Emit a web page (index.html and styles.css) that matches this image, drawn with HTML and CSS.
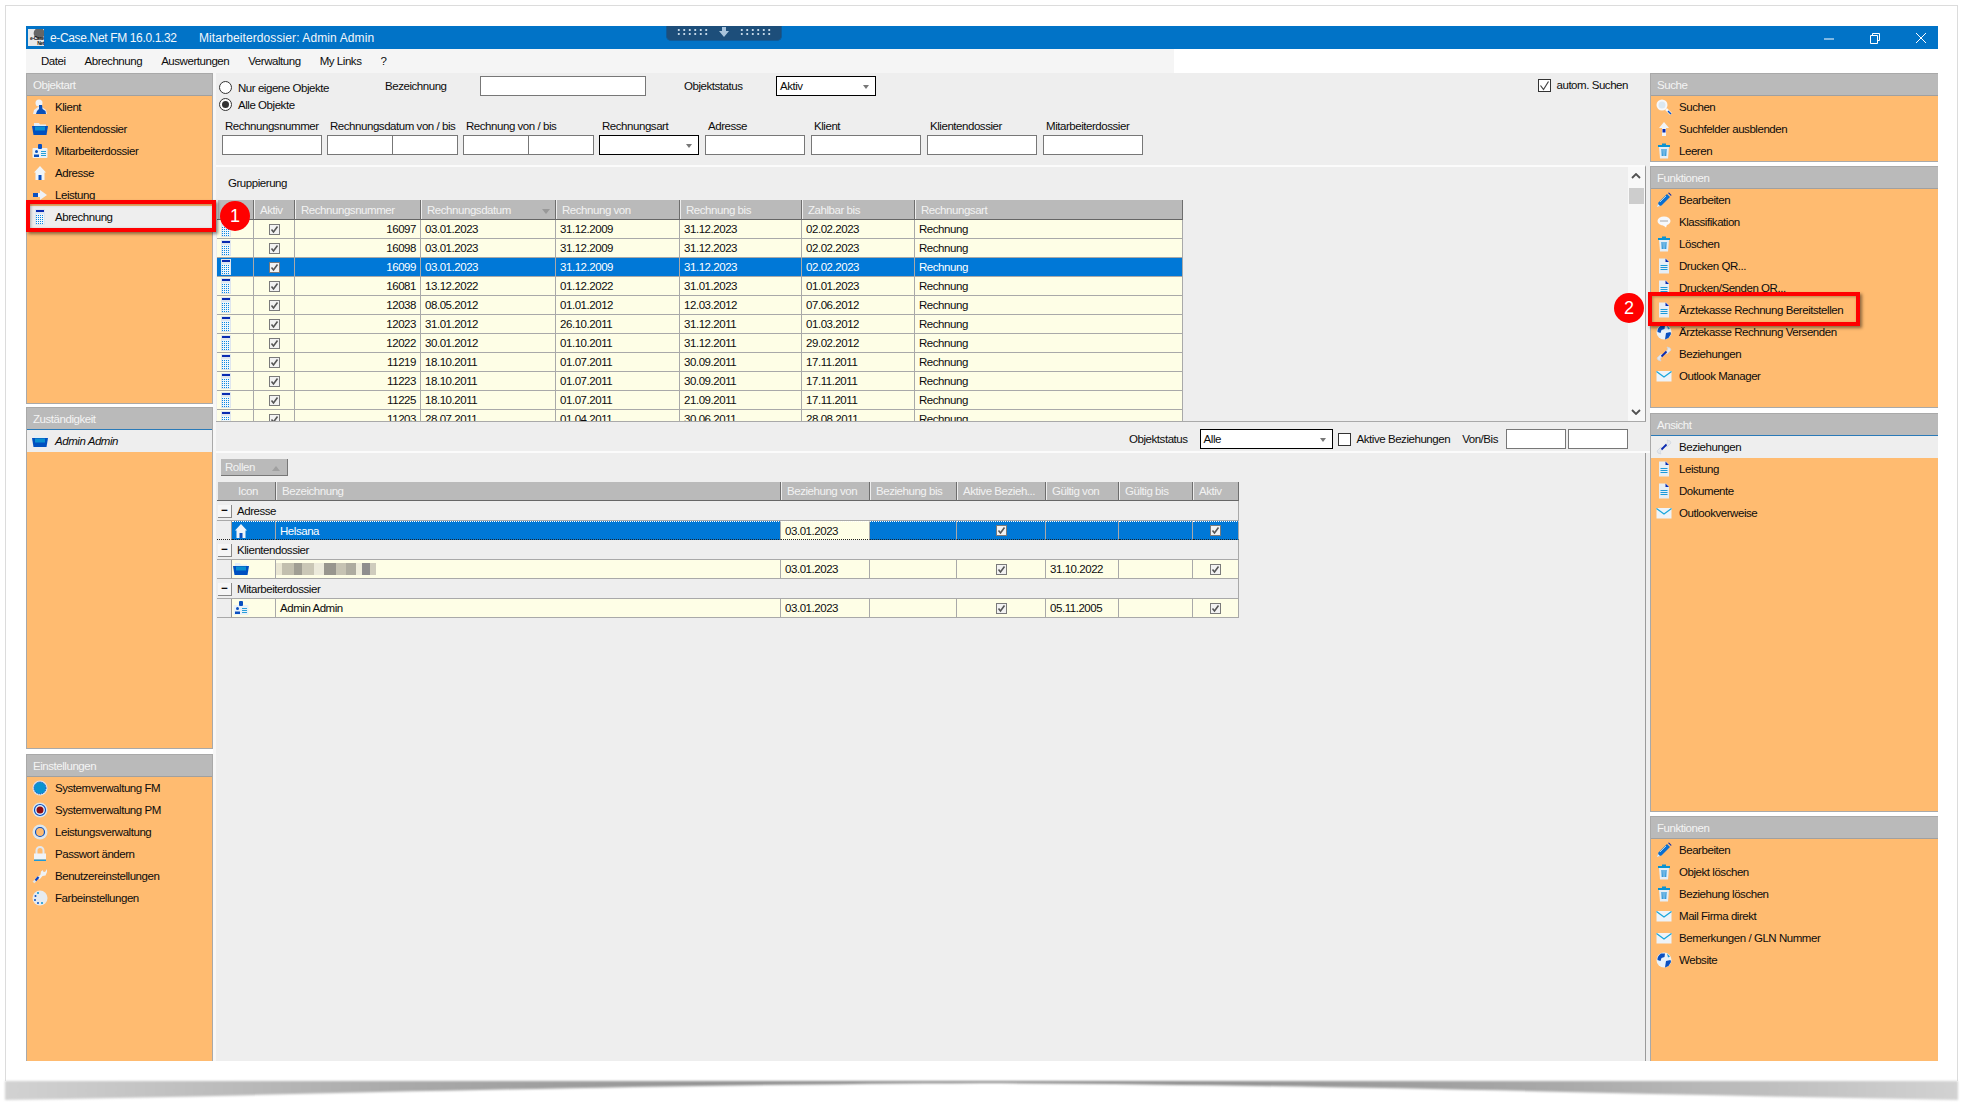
FILE: index.html
```html
<!DOCTYPE html>
<html lang="de">
<head>
    <meta charset="UTF-8">
    <meta name="viewport" content="width=device-width, initial-scale=1.0">
    <title>e-Case.Net FM - Abrechnung</title>
    <link rel="stylesheet" href="styles.css">
</head>
<body>
    <!-- icon sprite -->
    <svg class="sprite" xmlns="http://www.w3.org/2000/svg">
        <defs>
            <linearGradient id="shadowFade" x1="0" x2="1" y1="0" y2="0">
                <stop offset="0" stop-color="#d2d2d2"/>
                <stop offset="0.2" stop-color="#aaa"/>
                <stop offset="0.5" stop-color="#808080"/>
                <stop offset="0.8" stop-color="#aaa"/>
                <stop offset="1" stop-color="#d2d2d2"/>
            </linearGradient>
        </defs>
        <symbol id="i-person" viewBox="0 0 16 16"><circle cx="7" cy="4" r="3.5" fill="#eef3fa"/><path d="M1 15l1-4 4-3h4l4 3 1 4z" fill="#e8eef7"/><path d="M7 6h3l.5 4 3 2 .5 3H4l1-3 2-2z" fill="#0a50b8"/></symbol>
        <symbol id="i-folder" viewBox="0 0 16 16"><path d="M2 2h5l1 1.500h6V7H2z" fill="#e4eef6"/><path d="M0 5h16l-1.500 9h-13z" fill="#0050c0"/><path d="M3 5.500h10v4H3z" fill="#0a8fd0"/></symbol>
        <symbol id="i-badge" viewBox="0 0 16 16"><rect x="0.5" y="5" width="15" height="10" rx="1" fill="#eaf2f8"/><rect x="6" y="1" width="4" height="5" rx="1" fill="#0a50c0"/><circle cx="4.5" cy="8.5" r="1.5" fill="#0a50c0"/><path d="M2 14v-2.500h5V14z" fill="#0a50c0"/><path d="M9 8.500h5M9 10.500h5M9 12.500h5" stroke="#29a0d8"/></symbol>
        <symbol id="i-house" viewBox="0 0 16 16"><path d="M8 1l6 6.500h-1.500V15h-9V7.500H2z" fill="#f0f4f8"/><rect x="6.5" y="10" width="3" height="5" fill="#0a50c0"/></symbol>
        <symbol id="i-arrow" viewBox="0 0 16 16"><path d="M8 3l7 5-7 5V10H1V6h7z" fill="#eef2f8"/><rect x="1" y="6" width="5" height="4" fill="#0a50c0"/></symbol>
        <symbol id="i-calc" viewBox="0 0 16 16"><rect x="3" y="0" width="10" height="16" fill="#dfe6ee"/><rect x="4" y="1" width="8" height="2" fill="#0a2bb0"/><rect x="4" y="5" width="8" height="10" fill="#eef7fc"/><path d="M4 6.500h8M4 8.500h8M4 10.500h8M4 12.500h8M4 14.500h8" stroke="#0a86e0" stroke-dasharray="1 1"/></symbol>
        <symbol id="i-search" viewBox="0 0 16 16"><circle cx="6" cy="6" r="4.500" fill="#dbe8f2" stroke="#f6f8fb" stroke-width="2"/><path d="M10 10l5 5" stroke="#f6f8fb" stroke-width="2.500"/><path d="M12 12l3 3" stroke="#0a50c0" stroke-width="1.500"/></symbol>
        <symbol id="i-up" viewBox="0 0 16 16"><path d="M8 1l5 6h-3v8H6V7H3z" fill="#f0f4f8"/><rect x="6.5" y="8" width="3" height="3.500" fill="#0a2bb0"/></symbol>
        <symbol id="i-trash" viewBox="0 0 16 16"><rect x="2" y="2" width="12" height="2" fill="#0a93d0"/><rect x="6" y="0.500" width="4" height="1.500" fill="#0a93d0"/><path d="M3 4h10l-1 11.500H4z" fill="#e6eef5"/><path d="M6 6l.3 7M8 6v7M10 6l-.3 7" stroke="#1e90d8" stroke-width="1.200"/></symbol>
        <symbol id="i-pencil" viewBox="0 0 16 16"><path d="M11 2l3 3-8.500 8.500-4 1 1-4z" fill="#0a6fd0"/><path d="M12 1l1-.5 2.500 2.500-.5 1z" fill="#0a2bb0"/><path d="M1 15l1-3 2 2z" fill="#eef4f8"/><path d="M4 10l6-6" stroke="#9cd2f0"/></symbol>
        <symbol id="i-chat" viewBox="0 0 16 16"><ellipse cx="8" cy="7" rx="6.500" ry="4.500" fill="#f6f8fb"/><path d="M6 10.500h5l-1 3z" fill="#f6f8fb"/><path d="M4.500 7h7" stroke="#555" stroke-dasharray="1 1"/></symbol>
        <symbol id="i-doc" viewBox="0 0 16 16"><path d="M3 .5h7l3 3V15.500H3z" fill="#e6eef5"/><path d="M9.500 .5l3.500 3.500h-3.500z" fill="#0a2bb0"/><path d="M4.500 7.500h7M4.500 9.500h7M4.500 11.500h7" stroke="#1e9ad8"/></symbol>
        <symbol id="i-globe" viewBox="0 0 16 16"><circle cx="8" cy="8" r="7.500" fill="#e8f2fa"/><path d="M5 1.500C3 3 1 5 1.500 8l3 1 1-3 3-1 .5-3.500zM10 9l4.500-1 .5 2-2.500 4-3.500 1.500z" fill="#0a50c0"/><path d="M11 1.500l3 3-2 1z" fill="#1e9ad8"/></symbol>
        <symbol id="i-link" viewBox="0 0 16 16"><path d="M2 14l-1-2 4-4 2 1-3 4 1 2zM14 2l1 2-4 4-2-1 3-4-1-2z" fill="#e4e8ee" stroke="#cfd6de" stroke-width="0.800"/><path d="M5.500 10.500l5-5" stroke="#0a2bb0" stroke-width="1.800"/></symbol>
        <symbol id="i-mail" viewBox="0 0 16 16"><rect x="0.5" y="3" width="15" height="10.500" fill="#eef3f8"/><path d="M0.500 3.500L8 9l7.500-5.500" fill="none" stroke="#16a6dc" stroke-width="1.200"/></symbol>
        <symbol id="i-gearfull" viewBox="0 0 16 16"><circle cx="8" cy="8" r="7.500" fill="#dce6ee"/><circle cx="8" cy="8" r="6" fill="#0a93d0" stroke="#0a40c0" stroke-dasharray="1 1"/></symbol>
        <symbol id="i-gearred" viewBox="0 0 16 16"><circle cx="8" cy="8" r="7.500" fill="#dce6ee"/><circle cx="8" cy="8" r="5.500" fill="#eaf0f5" stroke="#0a50c0" stroke-width="1.200"/><circle cx="8" cy="8" r="3.500" fill="#8a0a14"/></symbol>
        <symbol id="i-gearring" viewBox="0 0 16 16"><circle cx="8" cy="8" r="7.500" fill="#dce6ee"/><circle cx="8" cy="8" r="4.500" fill="#ffbb70" stroke="#0a50c0" stroke-width="1.200"/></symbol>
        <symbol id="i-lock" viewBox="0 0 16 16"><path d="M4.500 8V4.500a3.500 3.500 0 0 1 7 0V8" fill="none" stroke="#e4e8ee" stroke-width="2"/><rect x="2" y="7.500" width="12" height="6" fill="#f0f3f7"/><rect x="2" y="13.500" width="12" height="1.500" fill="#1e9ad8"/></symbol>
        <symbol id="i-wrench" viewBox="0 0 16 16"><path d="M15 1l-2 3-2-.5L11 2l-2 1.500-.5 3-3 3.500 2 1.500 3-3.500 3-.5 1.500-3.500z" fill="#eef2f6"/><path d="M7 8.500l-5.500 6" stroke="#dfe5ea" stroke-width="2.500"/><path d="M6.500 9l-3 3.500" stroke="#0a40c0" stroke-width="2"/></symbol>
        <symbol id="i-palette" viewBox="0 0 16 16"><circle cx="8" cy="8" r="7.500" fill="#e6ebf0"/><circle cx="3.5" cy="6" r="1" fill="#0a50c0"/><circle cx="3" cy="10" r="1" fill="#0a50c0"/><circle cx="6" cy="13" r="1" fill="#0a50c0"/><circle cx="10" cy="13" r="1" fill="#0a93d0"/><circle cx="6" cy="3" r="1" fill="#0a93d0"/></symbol>
        <symbol id="i-check" viewBox="0 0 11 11"><rect x="0.5" y="0.5" width="10" height="10" fill="#f2f2f2" stroke="#7a7a7a"/><path d="M2.500 5.500l2 2.500 4-5.500" fill="none" stroke="#555" stroke-width="1.600"/></symbol>
        <symbol id="i-chevup" viewBox="0 0 10 6"><path d="M1 5l4-4 4 4" fill="none" stroke="#505050" stroke-width="1.800"/></symbol>
        <symbol id="i-chevdown" viewBox="0 0 10 6"><path d="M1 1l4 4 4-4" fill="none" stroke="#505050" stroke-width="1.800"/></symbol>
    </svg>

    <div class="sheet">
        <div class="window">
            <!-- title bar -->
            <header class="titlebar">
                <div class="logo"><span>e-Case</span><span>Net</span></div>
                <span class="app-name">e-Case.Net FM 16.0.1.32</span>
                <span class="doc-name">Mitarbeiterdossier: Admin Admin</span>
                <div class="win-buttons">
                    <svg width="12" height="12" viewBox="0 0 12 12"><path d="M1 7h10" stroke="#fff"/></svg>
                    <svg width="12" height="12" viewBox="0 0 12 12"><path d="M3.500 3V1.500h7v7H8.500M1.500 3.500h7v8h-7z" fill="none" stroke="#fff"/></svg>
                    <svg width="12" height="12" viewBox="0 0 12 12"><path d="M1 1l10 10M11 1L1 11" stroke="#fff"/></svg>
                </div>
                <div class="drag-tab">
                    <span class="dots"></span>
                    <svg width="12" height="10" viewBox="0 0 12 10"><path d="M4 0h4v4h3L6 10 1 4h3z" fill="#a9c4dc"/></svg>
                    <span class="dots"></span>
                </div>
            </header>

            <nav class="menubar">
                <div class="menu-items">
                    <span>Datei</span>
                    <span>Abrechnung</span>
                    <span>Auswertungen</span>
                    <span>Verwaltung</span>
                    <span>My Links</span>
                    <span>?</span>
                </div>
            </nav>

            <div class="workspace">
                <!-- left column -->
                <aside class="sidebar sidebar-left">
                    <section class="panel panel-objektart">
                        <h2 class="panel-title">Objektart</h2>
                        <div class="item"><svg class="icon"><use href="#i-person"/></svg>Klient</div>
                        <div class="item"><svg class="icon"><use href="#i-folder"/></svg>Klientendossier</div>
                        <div class="item"><svg class="icon"><use href="#i-badge"/></svg>Mitarbeiterdossier</div>
                        <div class="item"><svg class="icon"><use href="#i-house"/></svg>Adresse</div>
                        <div class="item"><svg class="icon"><use href="#i-arrow"/></svg>Leistung</div>
                        <div class="item item-active"><svg class="icon"><use href="#i-calc"/></svg>Abrechnung</div>
                    </section>
                    <section class="panel panel-zustaendig">
                        <h2 class="panel-title panel-title-blue">Zuständigkeit</h2>
                        <div class="item item-active item-italic"><svg class="icon"><use href="#i-folder"/></svg>Admin Admin</div>
                    </section>
                    <section class="panel panel-einstellungen">
                        <h2 class="panel-title">Einstellungen</h2>
                        <div class="item"><svg class="icon"><use href="#i-gearfull"/></svg>Systemverwaltung FM</div>
                        <div class="item"><svg class="icon"><use href="#i-gearred"/></svg>Systemverwaltung PM</div>
                        <div class="item"><svg class="icon"><use href="#i-gearring"/></svg>Leistungsverwaltung</div>
                        <div class="item"><svg class="icon"><use href="#i-lock"/></svg>Passwort ändern</div>
                        <div class="item"><svg class="icon"><use href="#i-wrench"/></svg>Benutzereinstellungen</div>
                        <div class="item"><svg class="icon"><use href="#i-palette"/></svg>Farbeinstellungen</div>
                    </section>
                </aside>

                <!-- middle column -->
                <main class="main">
                    <section class="filters">
                        <div class="filter-top">
                            <div class="radios">
                                <label class="radio-line"><span class="radio"></span>Nur eigene Objekte</label>
                                <label class="radio-line"><span class="radio radio-on"></span>Alle Objekte</label>
                            </div>
                            <span class="lbl lbl-bez">Bezeichnung</span>
                            <input class="box box-bez" type="text">
                            <span class="lbl lbl-status">Objektstatus</span>
                            <div class="combo combo-status">Aktiv<i class="caret"></i></div>
                            <label class="auto-search"><span class="checkbox"><svg width="13" height="13" viewBox="0 0 13 13"><path d="M2.500 6.500l3 4 5-8" fill="none" stroke="#444" stroke-width="1.200"/></svg></span>autom. Suchen</label>
                        </div>
                        <div class="filter-fields">
                            <div class="field field-100"><span>Rechnungsnummer</span><input class="box" type="text"></div>
                            <div class="field field-131"><span>Rechnungsdatum von / bis</span><div class="pair"><input class="box" type="text"><input class="box" type="text"></div></div>
                            <div class="field field-131"><span>Rechnung von / bis</span><div class="pair"><input class="box" type="text"><input class="box" type="text"></div></div>
                            <div class="field field-100"><span>Rechnungsart</span><div class="combo">&nbsp;<i class="caret"></i></div></div>
                            <div class="field field-100 field-gap"><span>Adresse</span><input class="box" type="text"></div>
                            <div class="field field-110 field-gap"><span>Klient</span><input class="box" type="text"></div>
                            <div class="field field-110 field-gap"><span>Klientendossier</span><input class="box" type="text"></div>
                            <div class="field field-100 field-gap"><span>Mitarbeiterdossier</span><input class="box" type="text"></div>
                        </div>
                    </section>

                    <section class="results">
                        <div class="results-body">
                            <div class="grouping">Gruppierung</div>
                            <div class="table-clip">
                                <table class="grid grid-invoices">
                                    <thead>
                                        <tr><th></th><th>Aktiv</th><th>Rechnungsnummer</th><th>Rechnungsdatum<i class="sort"></i></th><th>Rechnung von</th><th>Rechnung bis</th><th>Zahlbar bis</th><th>Rechnungsart</th></tr>
                                    </thead>
                                    <tbody>
                                        <tr><td class="c-icon"><svg class="icon"><use href="#i-calc"/></svg></td><td class="c-check"><svg class="tick"><use href="#i-check"/></svg></td><td class="num">16097</td><td>03.01.2023</td><td>31.12.2009</td><td>31.12.2023</td><td>02.02.2023</td><td>Rechnung</td></tr>
                                        <tr><td class="c-icon"><svg class="icon"><use href="#i-calc"/></svg></td><td class="c-check"><svg class="tick"><use href="#i-check"/></svg></td><td class="num">16098</td><td>03.01.2023</td><td>31.12.2009</td><td>31.12.2023</td><td>02.02.2023</td><td>Rechnung</td></tr>
                                        <tr class="selected"><td class="c-icon"><svg class="icon"><use href="#i-calc"/></svg></td><td class="c-check"><svg class="tick"><use href="#i-check"/></svg></td><td class="num">16099</td><td>03.01.2023</td><td>31.12.2009</td><td>31.12.2023</td><td>02.02.2023</td><td>Rechnung</td></tr>
                                        <tr><td class="c-icon"><svg class="icon"><use href="#i-calc"/></svg></td><td class="c-check"><svg class="tick"><use href="#i-check"/></svg></td><td class="num">16081</td><td>13.12.2022</td><td>01.12.2022</td><td>31.01.2023</td><td>01.01.2023</td><td>Rechnung</td></tr>
                                        <tr><td class="c-icon"><svg class="icon"><use href="#i-calc"/></svg></td><td class="c-check"><svg class="tick"><use href="#i-check"/></svg></td><td class="num">12038</td><td>08.05.2012</td><td>01.01.2012</td><td>12.03.2012</td><td>07.06.2012</td><td>Rechnung</td></tr>
                                        <tr><td class="c-icon"><svg class="icon"><use href="#i-calc"/></svg></td><td class="c-check"><svg class="tick"><use href="#i-check"/></svg></td><td class="num">12023</td><td>31.01.2012</td><td>26.10.2011</td><td>31.12.2011</td><td>01.03.2012</td><td>Rechnung</td></tr>
                                        <tr><td class="c-icon"><svg class="icon"><use href="#i-calc"/></svg></td><td class="c-check"><svg class="tick"><use href="#i-check"/></svg></td><td class="num">12022</td><td>30.01.2012</td><td>01.10.2011</td><td>31.12.2011</td><td>29.02.2012</td><td>Rechnung</td></tr>
                                        <tr><td class="c-icon"><svg class="icon"><use href="#i-calc"/></svg></td><td class="c-check"><svg class="tick"><use href="#i-check"/></svg></td><td class="num">11219</td><td>18.10.2011</td><td>01.07.2011</td><td>30.09.2011</td><td>17.11.2011</td><td>Rechnung</td></tr>
                                        <tr><td class="c-icon"><svg class="icon"><use href="#i-calc"/></svg></td><td class="c-check"><svg class="tick"><use href="#i-check"/></svg></td><td class="num">11223</td><td>18.10.2011</td><td>01.07.2011</td><td>30.09.2011</td><td>17.11.2011</td><td>Rechnung</td></tr>
                                        <tr><td class="c-icon"><svg class="icon"><use href="#i-calc"/></svg></td><td class="c-check"><svg class="tick"><use href="#i-check"/></svg></td><td class="num">11225</td><td>18.10.2011</td><td>01.07.2011</td><td>21.09.2011</td><td>17.11.2011</td><td>Rechnung</td></tr>
                                        <tr><td class="c-icon"><svg class="icon"><use href="#i-calc"/></svg></td><td class="c-check"><svg class="tick"><use href="#i-check"/></svg></td><td class="num">11203</td><td>28.07.2011</td><td>01.04.2011</td><td>30.06.2011</td><td>28.08.2011</td><td>Rechnung</td></tr>
                                    </tbody>
                                </table>
                            </div>
                        </div>
                        <div class="scrollbar">
                            <svg class="chev" viewBox="0 0 10 6"><use href="#i-chevup"/></svg>
                            <div class="thumb"></div>
                            <svg class="chev chev-down" viewBox="0 0 10 6"><use href="#i-chevdown"/></svg>
                        </div>
                    </section>

                    <section class="relation-filter">
                        <span class="lbl">Objektstatus</span>
                        <div class="combo combo-alle">Alle<i class="caret"></i></div>
                        <label class="active-rel"><span class="checkbox"></span>Aktive Beziehungen</label>
                        <span class="lbl lbl-vonbis">Von/Bis</span>
                        <div class="pair pair-vonbis"><input class="box" type="text"><input class="box" type="text"></div>
                    </section>

                    <section class="relations">
                        <div class="rollen">Rollen<i class="rollen-caret"></i></div>
                        <table class="grid grid-relations">
                            <colgroup><col><col><col><col><col><col><col><col><col></colgroup>
                            <thead>
                                <tr><th colspan="2" class="th-icon">Icon</th><th>Bezeichnung</th><th>Beziehung von</th><th>Beziehung bis</th><th>Aktive Bezieh...</th><th>Gültig von</th><th>Gültig bis</th><th>Aktiv</th></tr>
                            </thead>
                            <tbody>
                                <tr class="group"><td colspan="9"><span class="minus">−</span>Adresse</td></tr>
                                <tr class="selected focused"><td class="indent"></td><td class="c-icon2"><svg class="icon"><use href="#i-house"/></svg></td><td>Helsana</td><td class="editing">03.01.2023</td><td></td><td class="c-check"><svg class="tick"><use href="#i-check"/></svg></td><td></td><td></td><td class="c-check"><svg class="tick"><use href="#i-check"/></svg></td></tr>
                                <tr class="group"><td colspan="9"><span class="minus">−</span>Klientendossier</td></tr>
                                <tr><td class="indent"></td><td class="c-icon2"><svg class="icon"><use href="#i-folder"/></svg></td><td><span class="blurred"></span></td><td>03.01.2023</td><td></td><td class="c-check"><svg class="tick"><use href="#i-check"/></svg></td><td>31.10.2022</td><td></td><td class="c-check"><svg class="tick"><use href="#i-check"/></svg></td></tr>
                                <tr class="group"><td colspan="9"><span class="minus">−</span>Mitarbeiterdossier</td></tr>
                                <tr><td class="indent"></td><td class="c-icon2"><svg class="icon"><use href="#i-badge"/></svg></td><td>Admin Admin</td><td>03.01.2023</td><td></td><td class="c-check"><svg class="tick"><use href="#i-check"/></svg></td><td>05.11.2005</td><td></td><td class="c-check"><svg class="tick"><use href="#i-check"/></svg></td></tr>
                            </tbody>
                        </table>
                    </section>
                </main>

                <!-- right column -->
                <aside class="sidebar sidebar-right">
                    <section class="panel panel-suche">
                        <h2 class="panel-title">Suche</h2>
                        <div class="item"><svg class="icon"><use href="#i-search"/></svg>Suchen</div>
                        <div class="item"><svg class="icon"><use href="#i-up"/></svg>Suchfelder ausblenden</div>
                        <div class="item"><svg class="icon"><use href="#i-trash"/></svg>Leeren</div>
                    </section>
                    <section class="panel panel-funktionen">
                        <h2 class="panel-title">Funktionen</h2>
                        <div class="item"><svg class="icon"><use href="#i-pencil"/></svg>Bearbeiten</div>
                        <div class="item"><svg class="icon"><use href="#i-chat"/></svg>Klassifikation</div>
                        <div class="item"><svg class="icon"><use href="#i-trash"/></svg>Löschen</div>
                        <div class="item"><svg class="icon"><use href="#i-doc"/></svg>Drucken QR...</div>
                        <div class="item"><svg class="icon"><use href="#i-doc"/></svg>Drucken/Senden QR...</div>
                        <div class="item"><svg class="icon"><use href="#i-doc"/></svg>Ärztekasse Rechnung Bereitstellen</div>
                        <div class="item"><svg class="icon"><use href="#i-globe"/></svg>Ärztekasse Rechnung Versenden</div>
                        <div class="item"><svg class="icon"><use href="#i-link"/></svg>Beziehungen</div>
                        <div class="item"><svg class="icon"><use href="#i-mail"/></svg>Outlook Manager</div>
                    </section>
                    <section class="panel panel-ansicht">
                        <h2 class="panel-title panel-title-blue">Ansicht</h2>
                        <div class="item item-active"><svg class="icon"><use href="#i-link"/></svg>Beziehungen</div>
                        <div class="item"><svg class="icon"><use href="#i-doc"/></svg>Leistung</div>
                        <div class="item"><svg class="icon"><use href="#i-doc"/></svg>Dokumente</div>
                        <div class="item"><svg class="icon"><use href="#i-mail"/></svg>Outlookverweise</div>
                    </section>
                    <section class="panel panel-funktionen2">
                        <h2 class="panel-title">Funktionen</h2>
                        <div class="item"><svg class="icon"><use href="#i-pencil"/></svg>Bearbeiten</div>
                        <div class="item"><svg class="icon"><use href="#i-trash"/></svg>Objekt löschen</div>
                        <div class="item"><svg class="icon"><use href="#i-trash"/></svg>Beziehung löschen</div>
                        <div class="item"><svg class="icon"><use href="#i-mail"/></svg>Mail Firma direkt</div>
                        <div class="item"><svg class="icon"><use href="#i-mail"/></svg>Bemerkungen / GLN Nummer</div>
                        <div class="item"><svg class="icon"><use href="#i-globe"/></svg>Website</div>
                    </section>
                </aside>
            </div>

            <!-- red marks over the screenshot -->
            <div class="mark mark-one"></div>
            <div class="mark-dot dot-one">1</div>
            <div class="mark mark-two"></div>
            <div class="mark-dot dot-two">2</div>
        </div>
    </div>
    <svg class="sheet-shadow" width="1953" height="22" viewBox="0 0 1953 22"><path d="M0 0H1953V19C1650 14 1350 4 976 2C600 4 300 14 0 19Z" fill="url(#shadowFade)"/></svg>
</body>
</html>
```

FILE: styles.css
```css
/* reset and page */
* {
    margin: 0;
    padding: 0;
    box-sizing: border-box;
}

html,
body {
    width: 1972px;
    height: 1110px;
    overflow: hidden;
}

body {
    background: #fff;
    color: #0c0c0c;
    font-family: "Liberation Sans", Arial, sans-serif;
    font-size: 11.5px;
    letter-spacing: -0.45px;
}

.sprite {
    position: absolute;
    width: 0;
    height: 0;
}

.sheet {
    width: 1953px;
    height: 1076px;
    margin: 5px 0 0 5px;
    padding: 20px 19px 0 20px;
    border: 1px solid #dcdcdc;
    border-bottom: 0;
    background: #fff;
}

.sheet-shadow {
    display: block;
    margin-left: 5px;
    filter: blur(0.8px);
}

.window {
    position: relative;
    display: flex;
    flex-direction: column;
    width: 1912px;
    height: 1035px;
}

/* title bar */
.titlebar {
    display: flex;
    align-items: center;
    height: 23px;
    padding-left: 2px;
    background: #0173c7;
    color: #f2f7fb;
    font-size: 12px;
    letter-spacing: 0;
}

.logo {
    display: flex;
    flex-direction: column;
    align-items: flex-end;
    justify-content: flex-end;
    width: 16px;
    height: 17px;
    margin-right: 6px;
    background: radial-gradient(circle at 70% 25%, #666 0 5px, #e8e8e8 6px);
    color: #111;
    font-size: 5px;
    font-weight: bold;
    line-height: 5px;
    letter-spacing: -0.4px;
}

.app-name {
    width: 149px;
    letter-spacing: -0.35px;
}

.doc-name {
    letter-spacing: 0.1px;
}

.win-buttons {
    display: flex;
    gap: 34px;
    margin-left: auto;
    padding-right: 11px;
}

.drag-tab {
    position: absolute;
    top: 0;
    left: 640px;
    display: flex;
    align-items: center;
    justify-content: center;
    gap: 9px;
    width: 116px;
    height: 15px;
    padding-bottom: 3px;
    border: 1px solid #0f5a98;
    border-top: 0;
    border-radius: 0 0 5px 5px;
    background: #1d4e7a;
}

.dots {
    width: 33px;
    height: 8px;
    background-image: radial-gradient(circle, #c3d6e6 1px, transparent 1.2px);
    background-size: 5.5px 4px;
}

/* menu */
.menubar {
    height: 24px;
    background: linear-gradient(to right, #f5f5f5 1148px, #fff 1148px);
}

.menu-items {
    display: flex;
    gap: 19px;
    padding-left: 15px;
    line-height: 24px;
}

/* three column area */
.workspace {
    display: grid;
    grid-template-columns: 187px 1437px 288px;
    height: 988px;
}

.sidebar {
    display: flex;
    flex-direction: column;
}

.panel {
    border: 1px solid #a9a9a9;
    border-top: 0;
    background: #ffbb70;
}

.sidebar-right .panel {
    border-right: 0;
}

.panel-objektart { height: 331px; }
.panel-zustaendig { height: 342px; margin-top: 3px; }
.panel-einstellungen { height: 307px; margin-top: 5px; border-bottom: 0; }
.panel-suche { height: 89px; }
.panel-funktionen { height: 242px; margin-top: 4px; }
.panel-ansicht { height: 399px; margin-top: 5px; }
.panel-funktionen2 { height: 245px; margin-top: 4px; border-bottom: 0; }

.panel-title {
    height: 23px;
    padding-left: 6px;
    border-top: 1px solid #a9a9a9;
    border-bottom: 1px solid #a0a0a0;
    background: #bababa;
    color: #f4f4f4;
    font-size: 11.5px;
    font-weight: normal;
    line-height: 22px;
}

.panel-title-blue {
    border-bottom: 1px solid #2a7ab8;
}

.item {
    display: flex;
    align-items: center;
    gap: 7px;
    height: 22px;
    padding-left: 5px;
    white-space: nowrap;
}

.item-active {
    background: #eee;
}

.item-italic {
    font-style: italic;
}

.icon {
    flex: none;
    width: 16px;
    height: 16px;
}

/* middle column */
.main {
    display: flex;
    flex-direction: column;
    border-left: 3px solid #f7f7f7;
    background: #eee;
}

.filters {
    height: 92px;
    padding: 3px 22px 0 0;
}

.filter-top {
    display: flex;
    align-items: flex-start;
    height: 38px;
    margin-bottom: 3px;
}

.lbl {
    line-height: 20px;
    white-space: nowrap;
}

.radios {
    width: 166px;
    margin-left: 3px;
    padding-top: 3px;
}

.radio-line {
    display: flex;
    align-items: center;
    gap: 6px;
    height: 17px;
}

.radio {
    position: relative;
    width: 13px;
    height: 13px;
    border: 1px solid #333;
    border-radius: 50%;
    background: #fff;
}

.radio-on::after {
    content: "";
    position: absolute;
    top: 2px;
    left: 2px;
    width: 7px;
    height: 7px;
    border-radius: 50%;
    background: #333;
}

.lbl-bez { width: 95px; }
.lbl-status { width: 92px; margin-left: 38px; }

.box {
    display: block;
    height: 20px;
    border: 1px solid #777;
    border-radius: 0;
    background: #fff;
    outline: none;
}

.box-bez { width: 166px; }

.combo {
    position: relative;
    height: 20px;
    padding-left: 3px;
    border: 1px solid #000;
    background: #fff;
    line-height: 18px;
}

.combo-status { width: 100px; }
.combo-alle { width: 133px; margin-left: 12px; }

.caret {
    position: absolute;
    top: 8px;
    right: 6px;
    border: 3px solid transparent;
    border-top: 4px solid #777;
    border-bottom: 0;
}

.checkbox {
    display: block;
    flex: none;
    width: 13px;
    height: 13px;
    border: 1px solid #333;
    background: #fff;
}

.checkbox svg {
    display: block;
    margin: -1px;
}

.auto-search {
    display: flex;
    align-items: center;
    gap: 5px;
    height: 18px;
    margin-left: auto;
}

.filter-fields {
    display: flex;
    gap: 5px;
    padding-left: 6px;
}

.field > span {
    display: block;
    height: 18px;
    padding-left: 3px;
    line-height: 18px;
    white-space: nowrap;
}

.field .box {
    width: 100%;
}

.field-100 { width: 100px; }
.field-110 { width: 110px; }
.field-131 { width: 131px; }
.field-gap { margin-left: 1px; }

.pair {
    display: flex;
}

.pair .box {
    flex: 1;
    min-width: 0;
}

.pair .box + .box {
    margin-left: -1px;
}

/* invoice list */
.results {
    display: flex;
    height: 257px;
    margin: 0 4px 0 0;
    border-top: 2px solid #fbfbfb;
    border-right: 1px solid #9a9a9a;
    border-bottom: 1px solid #a9a9a9;
}

.results-body {
    flex: 1;
    min-width: 0;
    padding-left: 1px;
}

.grouping {
    height: 33px;
    padding-left: 11px;
    line-height: 32px;
}

.table-clip {
    height: 221px;
    overflow: hidden;
}

.scrollbar {
    display: flex;
    flex-direction: column;
    align-items: center;
    width: 17px;
    padding: 6px 1px 6px 0;
    background: #f8f8f8;
}

.chev {
    width: 10px;
    height: 6px;
}

.chev-down {
    margin-top: auto;
}

.thumb {
    width: 15px;
    height: 16px;
    margin-top: 9px;
    background: #cdcdcd;
}

.grid {
    border-collapse: separate;
    border-spacing: 0;
    table-layout: fixed;
}

.grid th {
    height: 20px;
    padding: 0 4px 0 6px;
    border-right: 1px solid #6e6e6e;
    border-bottom: 1px solid #666;
    background: #bababa;
    box-shadow: inset 1px 0 0 #ededed;
    color: #f2f2f2;
    font-weight: normal;
    text-align: left;
    white-space: nowrap;
    overflow: hidden;
}

.grid td {
    height: 19px;
    padding: 0 4px;
    border-right: 1px solid #a9a9a9;
    border-bottom: 1px solid #a9a9a9;
    background: #fefee6;
    white-space: nowrap;
    overflow: hidden;
}

.grid .num {
    text-align: right;
}

.grid .selected td {
    background: #0078d7;
    color: #fff;
}

.grid .c-icon,
.grid .c-icon2,
.grid .c-check {
    padding: 0;
    text-align: center;
    line-height: 0;
}

.grid .c-icon {
    padding-left: 1px;
    text-align: left;
}

.grid .c-icon2 {
    padding-left: 1px;
    text-align: left;
}

.tick {
    width: 11px;
    height: 11px;
}

.sort {
    position: absolute;
    border: 4px solid transparent;
    border-top: 5px solid #999;
    border-bottom: 0;
    margin: 5px 0 0 31px;
}

.grid-invoices {
    width: 966px;
}

.grid-invoices th:nth-child(1) { width: 37px; }
.grid-invoices th:nth-child(2) { width: 41px; }
.grid-invoices th:nth-child(3) { width: 126px; }
.grid-invoices th:nth-child(4) { width: 135px; }
.grid-invoices th:nth-child(5) { width: 124px; }
.grid-invoices th:nth-child(6) { width: 122px; }
.grid-invoices th:nth-child(7) { width: 113px; }

/* relation filter row */
.relation-filter {
    display: flex;
    align-items: center;
    justify-content: flex-end;
    height: 31px;
    padding: 5px 22px 0 0;
    border-bottom: 2px solid #fbfbfb;
}

.active-rel {
    display: flex;
    align-items: center;
    gap: 6px;
    margin-left: 5px;
}

.lbl-vonbis {
    margin-left: 12px;
}

.pair-vonbis {
    width: 122px;
    margin-left: 8px;
}

.relation-filter .pair .box + .box {
    margin-left: 2px;
}

/* relations list */
.relations {
    flex: 1;
    margin-right: 4px;
    padding: 6px 0 0 1px;
    border-right: 1px solid #9a9a9a;
}

.rollen {
    position: relative;
    width: 67px;
    height: 17px;
    margin: 0 0 6px 4px;
    padding-left: 4px;
    border-right: 1px solid #777;
    border-bottom: 1px solid #777;
    background: #bababa;
    color: #f2f2f2;
    line-height: 16px;
}

.rollen-caret {
    position: absolute;
    top: 7px;
    right: 7px;
    border: 4px solid transparent;
    border-top: 0;
    border-bottom: 5px solid #a0a0a0;
}

.grid-relations {
    width: 1022px;
}

.grid-relations th {
    height: 19px;
}

.grid-relations col:nth-child(1) { width: 15px; }
.grid-relations col:nth-child(2) { width: 44px; }
.grid-relations col:nth-child(3) { width: 505px; }
.grid-relations col:nth-child(4) { width: 89px; }
.grid-relations col:nth-child(5) { width: 87px; }
.grid-relations col:nth-child(6) { width: 89px; }
.grid-relations col:nth-child(7) { width: 73px; }
.grid-relations col:nth-child(8) { width: 74px; }
.grid-relations col:nth-child(9) { width: 46px; }

.grid-relations .th-icon {
    padding-left: 21px;
}

.grid .group td {
    height: 20px;
    padding: 2px 0 0 1px;
    background: #eee;
}

.minus {
    display: inline-block;
    width: 14px;
    height: 13px;
    margin-right: 5px;
    border-right: 1px solid #888;
    border-bottom: 1px solid #888;
    background: #f6f6f6;
    font-weight: bold;
    line-height: 11px;
    text-align: center;
    vertical-align: middle;
}

.grid .indent {
    padding: 0;
    background: #eee;
    border-right-color: #999;
}

.grid .focused td {
    border-top: 1px dotted #fff;
    border-bottom: 1px dotted #222;
}

.grid .focused .indent {
    border-top: 0;
    background: #eee;
}

.grid .selected .editing {
    background: #fefee6;
    color: #111;
}

.blurred {
    display: block;
    width: 100px;
    height: 12px;
    margin-left: -4px;
    background: linear-gradient(to right, #e9e6d2 0 6px, #c2bfae 6px 18px, #a09e93 18px 26px, #cac7b6 26px 38px, #eceadb 38px 48px, #98968e 48px 60px, #c6c3b3 60px 70px, #aeaca0 70px 80px, #efeddc 80px 86px, #8f8e8e 86px 94px, #cfccbd 94px 100px);
    filter: blur(0.6px);
}

/* red marks */
.mark {
    position: absolute;
    border: 4px solid #f00;
    box-shadow: 2px 2px 3px rgba(0, 0, 0, 0.45), inset 1px 1px 3px rgba(0, 0, 0, 0.3);
}

.mark-one {
    top: 174px;
    left: 0;
    width: 190px;
    height: 32px;
}

.mark-two {
    top: 266px;
    left: 1622px;
    width: 212px;
    height: 34px;
}

.mark-dot {
    position: absolute;
    width: 30px;
    height: 30px;
    border-radius: 50%;
    background: #f00;
    color: #fff;
    font-size: 18px;
    letter-spacing: 0;
    line-height: 30px;
    text-align: center;
}

.dot-one {
    top: 175px;
    left: 194px;
}

.dot-two {
    top: 267px;
    left: 1588px;
}
```
